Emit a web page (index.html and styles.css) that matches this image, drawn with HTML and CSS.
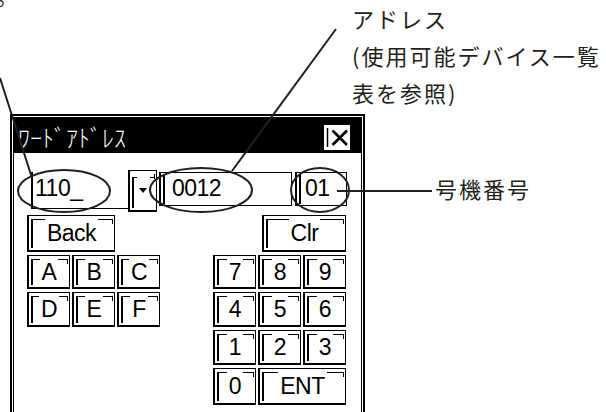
FILE: index.html
```html
<!DOCTYPE html>
<html lang="ja">
<head>
<meta charset="utf-8">
<link rel="stylesheet" href="styles.css">
</head>
<body>
<div class="page">
  <span class="frag">。</span>
  <div class="callout-top">アドレス<br>(使用可能デバイス一覧<br>表を参照)</div>
  <div class="main">
    <div class="dialog">
      <div class="frame">
        <div class="titlebar">
          <span class="title">ﾜｰﾄﾞｱﾄﾞﾚｽ</span>
          <span class="close"><svg width="26" height="25" viewBox="0 0 26 25"><path d="M3.5 3v19" stroke="#000" stroke-width="1.5" fill="none"/><path d="M8.5 5.5L23 20M23 5.5L8.5 20" stroke="#000" stroke-width="2.6" fill="none"/></svg></span>
        </div>
        <div class="body">
          <div class="entry">
            <div class="combo">
              <div class="edit">110_</div>
              <div class="key drop"><span class="lbl"><i class="tri"></i></span></div>
            </div>
            <div class="field addr">0012</div>
            <div class="field stn">01</div>
          </div>
          <div class="keypad">
            <div class="key c1 s2 r1"><span class="lbl">Back</span></div>
            <div class="key c6 s2 r1 clr"><span class="lbl">Clr</span></div>
            <div class="key c1 r2"><span class="lbl">A</span></div>
            <div class="key c2 r2"><span class="lbl">B</span></div>
            <div class="key c3 r2"><span class="lbl">C</span></div>
            <div class="key c5 r2"><span class="lbl">7</span></div>
            <div class="key c6 r2"><span class="lbl">8</span></div>
            <div class="key c7 r2"><span class="lbl">9</span></div>
            <div class="key c1 r3"><span class="lbl">D</span></div>
            <div class="key c2 r3"><span class="lbl">E</span></div>
            <div class="key c3 r3"><span class="lbl">F</span></div>
            <div class="key c5 r3"><span class="lbl">4</span></div>
            <div class="key c6 r3"><span class="lbl">5</span></div>
            <div class="key c7 r3"><span class="lbl">6</span></div>
            <div class="key c5 r4"><span class="lbl">1</span></div>
            <div class="key c6 r4"><span class="lbl">2</span></div>
            <div class="key c7 r4"><span class="lbl">3</span></div>
            <div class="key c5 r5"><span class="lbl">0</span></div>
            <div class="key c6 s2 r5"><span class="lbl">ENT</span></div>
          </div>
        </div>
      </div>
    </div>
    <div class="callout-side">号機番号</div>
  </div>
  <svg class="marks" width="606" height="412" viewBox="0 0 606 412">
    <g fill="none" stroke="#231f20" stroke-width="2">
      <line x1="0" y1="78" x2="32" y2="178"/>
      <line x1="336" y1="29" x2="232" y2="171"/>
      <line x1="337" y1="191" x2="432" y2="191"/>
      <ellipse cx="64" cy="191" rx="46" ry="21"/>
      <ellipse cx="201" cy="190" rx="51" ry="22"/>
      <ellipse cx="320" cy="190" rx="29" ry="22"/>
    </g>
  </svg>
</div>
</body>
</html>
```
FILE: styles.css
```css
html, body {
  margin: 0;
  padding: 0;
  background: #fff;
  overflow: hidden;
}

.page {
  position: relative;
  width: 606px;
  height: 412px;
  overflow: hidden;
  font-family: "Noto Sans CJK JP", sans-serif;
  color: #231f20;
}

.frag {
  position: absolute;
  left: -4px;
  top: -23px;
  font-size: 22px;
  line-height: 37px;
}

.callout-top {
  padding-left: 352px;
  font-size: 22px;
  line-height: 37px;
  letter-spacing: 2px;
  white-space: nowrap;
}

.main {
  display: flex;
  align-items: flex-start;
  margin-top: 3px;
  padding-left: 10px;
}

.dialog {
  flex: none;
  width: 355px;
  height: 330px;
  box-sizing: border-box;
  border: 2px solid #000;
  padding: 1px;
  background: #fff;
}

.frame {
  height: 100%;
  box-sizing: border-box;
  border: 1px solid #000;
  border-bottom: none;
}

.titlebar {
  height: 35px;
  background: #000;
  display: flex;
  align-items: center;
}

.title {
  color: #fff;
  font-size: 24px;
  font-weight: 300;
  line-height: 1;
  padding-left: 4px;
  padding-top: 3px;
  white-space: nowrap;
}

.close {
  display: block;
  align-self: flex-start;
  margin: 7px 11px 0 auto;
  width: 26px;
  height: 25px;
  background: #fff;
}

.close svg {
  display: block;
}

.body {
  padding-top: 17px;
}

.entry {
  display: flex;
  align-items: flex-start;
  margin-left: 17px;
  font-family: "Liberation Sans", Arial, sans-serif;
  font-size: 23px;
  color: #000;
}

.combo {
  display: flex;
  align-items: flex-start;
}

.edit {
  width: 97px;
  height: 37px;
  margin-top: 2px;
  box-sizing: border-box;
  border-left: 2px solid #000;
  border-bottom: 1px solid #000;
  padding: 1px 0 0 2px;
  line-height: 31px;
  letter-spacing: -0.5px;
}

.field {
  position: relative;
  height: 34px;
  margin-top: 2px;
  box-sizing: border-box;
  border: 1px solid #000;
  border-left-width: 2px;
  line-height: 31px;
  letter-spacing: -0.5px;
}

.field::before {
  content: "";
  position: absolute;
  left: 2px;
  top: 1px;
  bottom: 1px;
  width: 2px;
  background: #000;
}

.addr {
  width: 133px;
  margin-left: 2px;
  padding-left: 11px;
}

.stn {
  width: 52px;
  margin-left: 3px;
  padding-left: 8px;
}

.keypad {
  display: grid;
  grid-template-columns: 43px 43px 43px 49px 43px 43px 43px;
  grid-template-rows: 37px 34px 35px 35px 37px;
  column-gap: 2px;
  row-gap: 3px;
  margin: 3px 0 0 13px;
}

.key {
  position: relative;
  box-sizing: border-box;
  border: 1px solid #000;
  border-left-width: 2px;
  border-bottom-width: 2px;
  background: #fff;
  display: flex;
  align-items: center;
  justify-content: center;
  font-family: "Liberation Sans", Arial, sans-serif;
  font-size: 23px;
  color: #000;
}

.key::before {
  content: "";
  position: absolute;
  left: 2px;
  top: 3px;
  right: 1px;
  bottom: 2px;
  border-left: 2px solid #000;
  border-top: 1px solid #000;
}

.key::after {
  content: "";
  position: absolute;
  right: 1px;
  top: 3px;
  width: 1px;
  height: 5px;
  background: #000;
}

.lbl {
  position: relative;
  background: #fff;
  line-height: 28px;
  padding: 0 2px;
  letter-spacing: -0.5px;
}

.drop {
  width: 29px;
  height: 42px;
}

.drop::before {
  top: 6px;
}

.drop .lbl {
  display: flex;
  align-items: center;
  justify-content: center;
  width: 11px;
  height: 28px;
  padding: 0 1px;
}

.tri {
  display: block;
  width: 0;
  height: 0;
  border-left: 4.5px solid transparent;
  border-right: 4.5px solid transparent;
  border-top: 5px solid #000;
}

.clr {
  margin-left: 4px;
}

.c1 { grid-column-start: 1; }
.c2 { grid-column-start: 2; }
.c3 { grid-column-start: 3; }
.c5 { grid-column-start: 5; }
.c6 { grid-column-start: 6; }
.c7 { grid-column-start: 7; }
.s2 { grid-column-end: span 2; }
.r1 { grid-row: 1; }
.r2 { grid-row: 2; }
.r3 { grid-row: 3; }
.r4 { grid-row: 4; }
.r5 { grid-row: 5; }

.callout-side {
  margin: 56px 0 0 70px;
  font-size: 22px;
  line-height: 37px;
  letter-spacing: 2px;
  white-space: nowrap;
}

.marks {
  position: absolute;
  left: 0;
  top: 0;
  pointer-events: none;
}
```
